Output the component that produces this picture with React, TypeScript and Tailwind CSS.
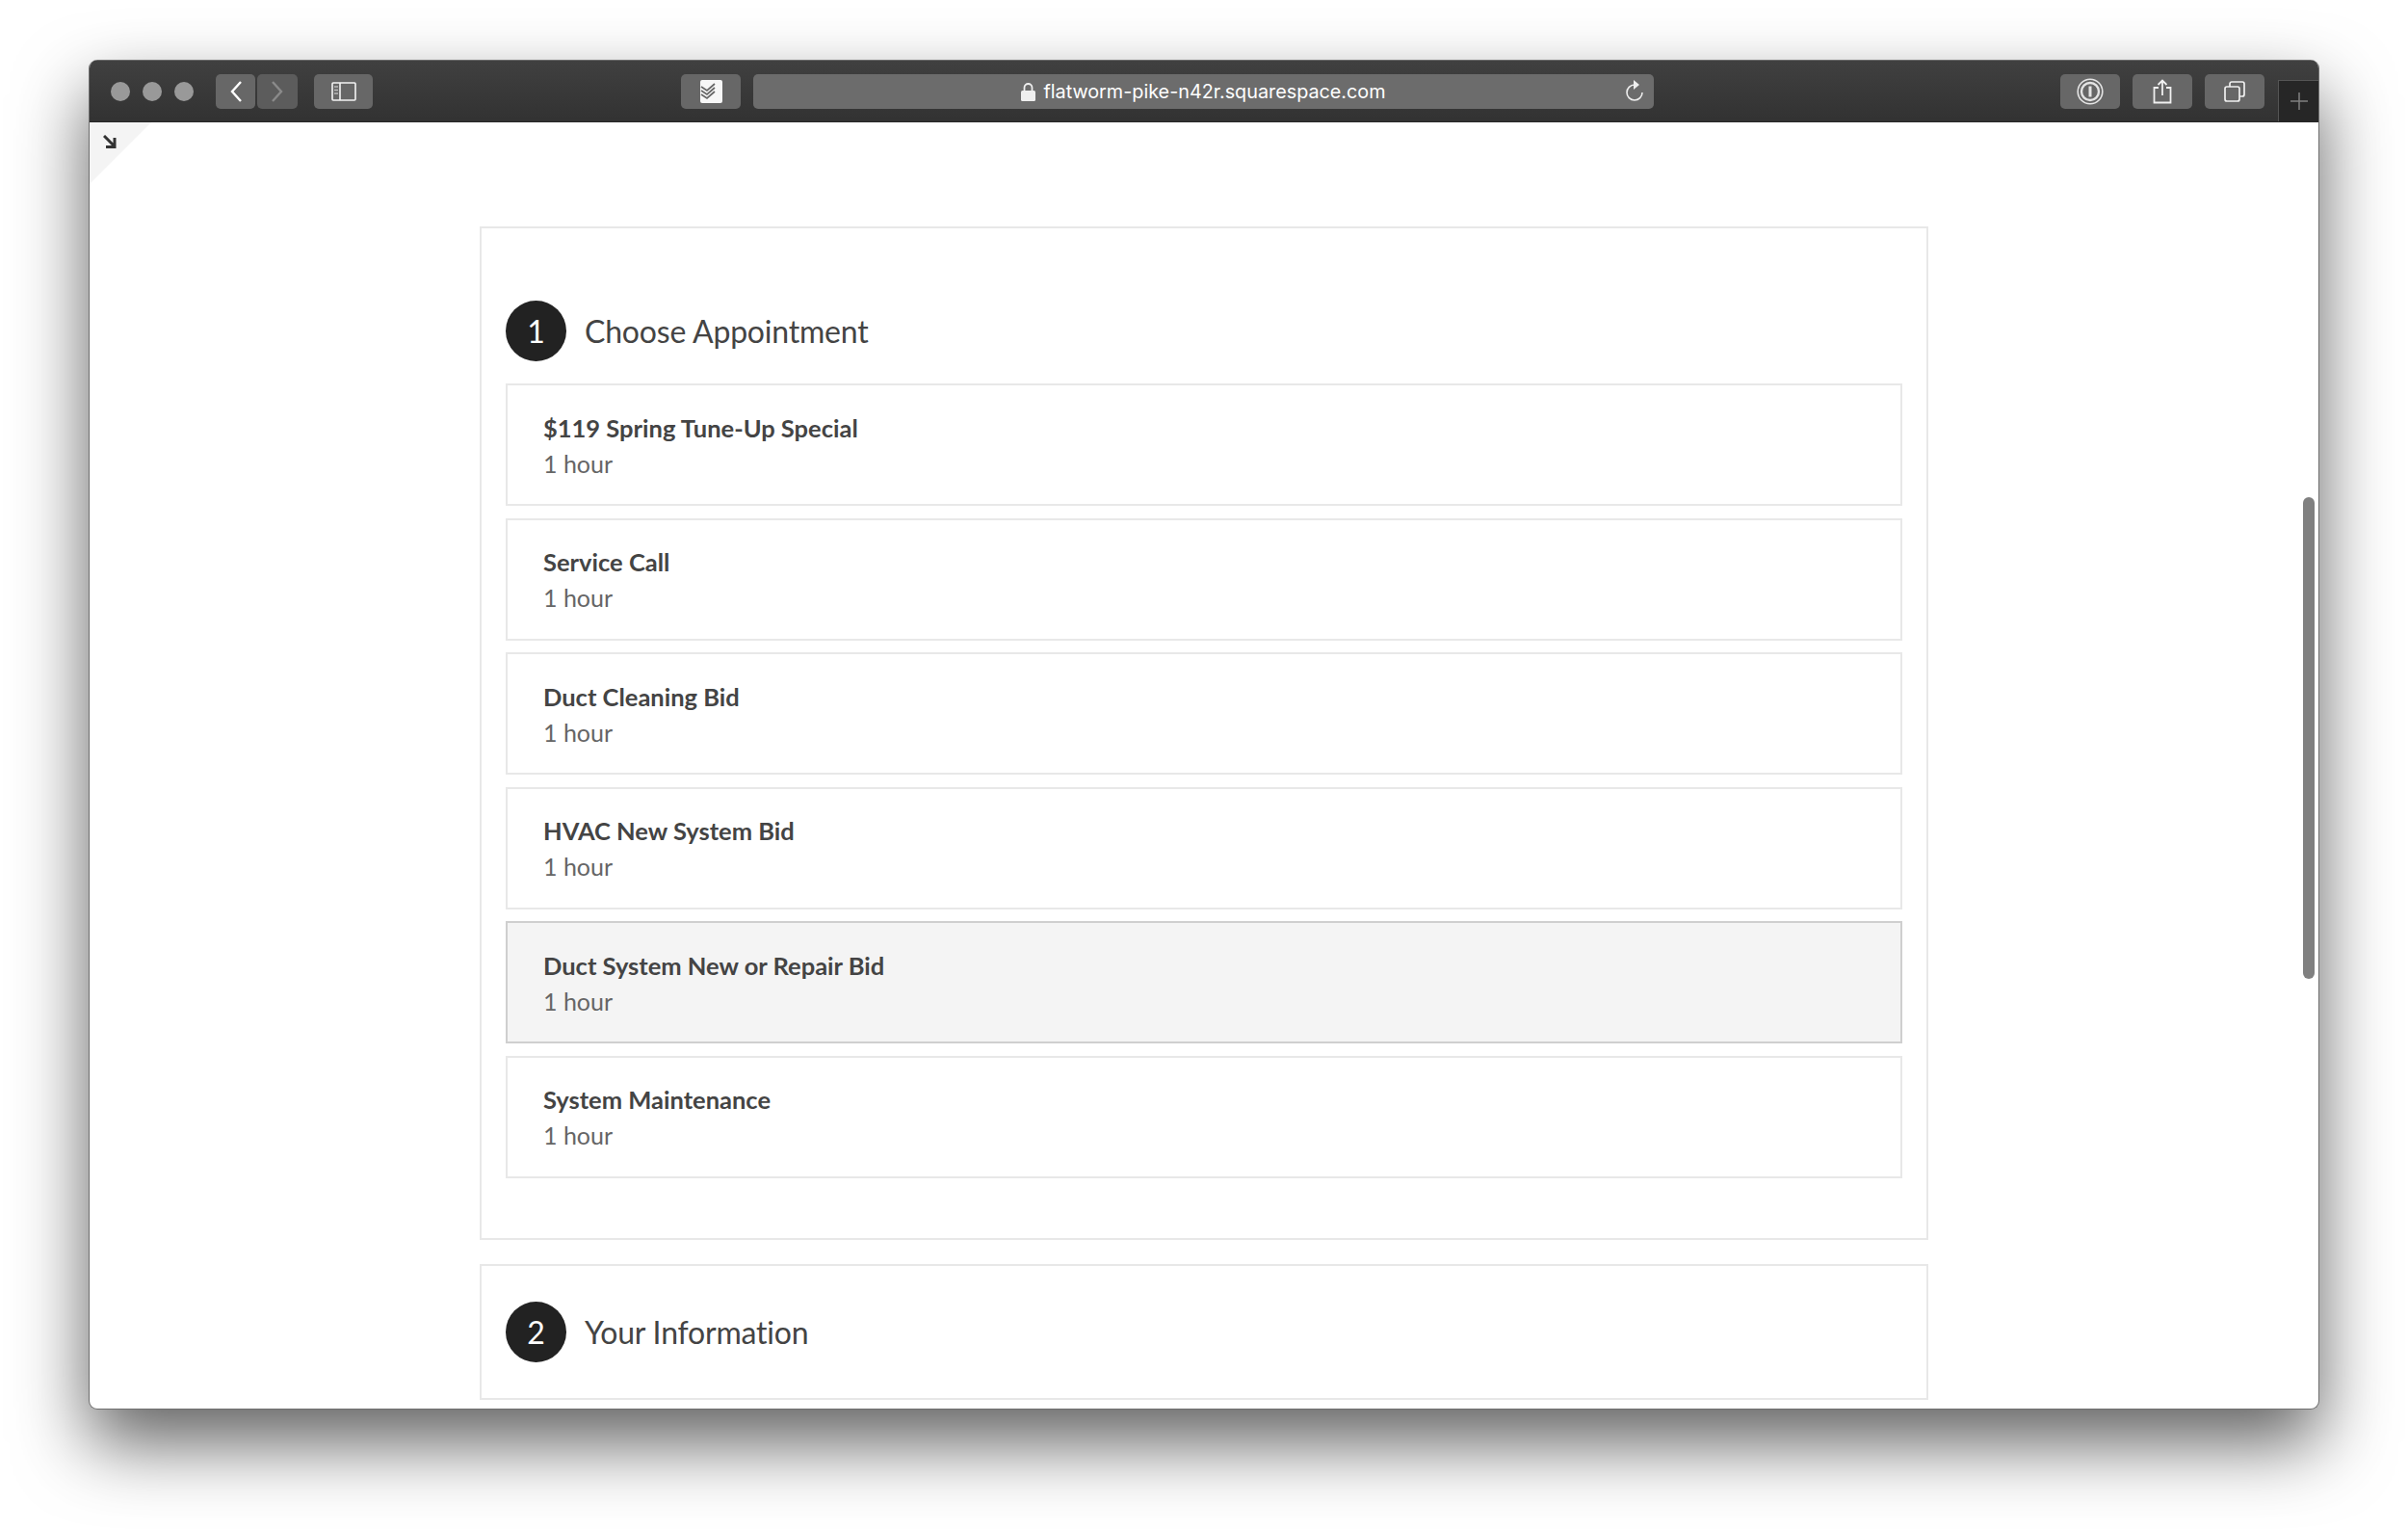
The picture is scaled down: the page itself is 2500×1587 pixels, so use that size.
const services = [
  "$119 Spring Tune-Up Special",
  "Service Call",
  "Duct Cleaning Bid",
  "HVAC New System Bid",
  "Duct System New or Repair Bid",
  "System Maintenance",
];

function ToolButton({ className = "w-[62px]", children }: { className?: string; children: React.ReactNode }) {
  return <div className={`flex h-[36px] items-center justify-center rounded-[5px] ${className}`}>{children}</div>;
}

function Toolbar() {
  return (
    <div className="relative flex h-[65px] shrink-0 items-center border-b border-t border-b-[#272727] border-t-[#6a6a6a] bg-gradient-to-b from-[#404040] to-[#323232] pl-[22px] pr-[56px] pt-[1px]">
      <div className="flex gap-[13px]">
        <div className="h-[20px] w-[20px] rounded-full bg-[#999999]" />
        <div className="h-[20px] w-[20px] rounded-full bg-[#999999]" />
        <div className="h-[20px] w-[20px] rounded-full bg-[#999999]" />
      </div>
      <div className="ml-[23px] flex gap-[2px]">
        <ToolButton className="w-[41px] bg-[#676767]">
          <svg width="14" height="24" viewBox="0 0 14 24" fill="none" stroke="#fff" strokeWidth="2.4">
            <path d="M12 2 3 12l9 10" />
          </svg>
        </ToolButton>
        <ToolButton className="w-[42px] bg-[#5c5c5c]">
          <svg width="14" height="24" viewBox="0 0 14 24" fill="none" stroke="#8a8a8a" strokeWidth="2.4">
            <path d="m2 2 9 10-9 10" />
          </svg>
        </ToolButton>
      </div>
      <ToolButton className="ml-[17px] w-[61px] bg-[#676767]">
        <svg width="26" height="20" viewBox="0 0 26 20" fill="none" stroke="#f4f4f4" strokeWidth="1.6">
          <rect x="1" y="1" width="24" height="18" rx="1" />
          <path d="M9 1v18" />
          <path d="M3 5h4M3 8.500h4M3 12h4" stroke="#bbb" strokeWidth="1.5" />
        </svg>
      </ToolButton>
      <ToolButton className="ml-[320px] w-[62px] bg-[#676767]">
        <svg width="23" height="24" viewBox="0 0 23 24">
          <rect width="23" height="24" rx="2" fill="#f7f7f7" />
          <path d="m1 7 6 4 8-7M1 11l6 4 8-7M1 15l6 4 8-7" fill="none" stroke="#666" strokeWidth="1.7" />
        </svg>
      </ToolButton>
      <div className="relative ml-[13px] flex h-[36px] w-[935px] items-center justify-center rounded-[5px] bg-[#6c6c6c] font-['Inter',sans-serif] text-[19.8px] text-white">
        <svg className="mr-[8px]" width="15" height="19" viewBox="0 0 15 19">
          <path d="M3.500 8V5a4 4 0 0 1 8 0v3" fill="none" stroke="#eee" strokeWidth="1.8" />
          <rect y="8" width="15" height="11" rx="1.500" fill="#eee" />
        </svg>
        <span className="pt-[2px]">flatworm-pike-n42r.squarespace.com</span>
        <svg className="absolute right-[9px] top-[6px]" width="22" height="24" viewBox="0 0 22 24" fill="none" stroke="#eee" strokeWidth="1.6">
          <path d="M11 5a8 8 0 1 0 8 8" />
          <path d="M10 0l6 5-6 5" fill="#eee" stroke="none" />
        </svg>
      </div>
      <div className="ml-auto flex gap-[13px]">
        <ToolButton className="w-[62px] bg-[#676767]">
          <svg width="28" height="28" viewBox="0 0 28 28" fill="none" stroke="#e4e4e4">
            <circle cx="14" cy="14" r="12.8" strokeWidth="1.6" />
            <circle cx="14" cy="14" r="9" strokeWidth="2.4" />
            <path d="M14 8.500v11" strokeWidth="3" />
          </svg>
        </ToolButton>
        <ToolButton className="w-[62px] bg-[#676767]">
          <svg width="20" height="26" viewBox="0 0 20 26" fill="none" stroke="#f0f0f0" strokeWidth="1.8">
            <path d="M6 9H1.500v15.500h17V9H14" />
            <path d="M10 17V2M5.500 6 10 1.500 14.500 6" />
          </svg>
        </ToolButton>
        <ToolButton className="w-[62px] bg-[#676767]">
          <svg width="22" height="22" viewBox="0 0 22 22" fill="none" stroke="#f0f0f0" strokeWidth="1.7">
            <rect x="1" y="6" width="15" height="15" rx="2" />
            <path d="M6 6V3a2 2 0 0 1 2-2h11a2 2 0 0 1 2 2v11a2 2 0 0 1-2 2h-3" />
          </svg>
        </ToolButton>
      </div>
      <div className="absolute bottom-0 right-0 flex h-[43px] w-[42px] items-center justify-center border-l border-t border-[#555555] bg-[#262626]">
        <svg width="20" height="20" viewBox="0 0 20 20" stroke="#808080" strokeWidth="1.5">
          <path d="M10 1v18M1 10h18" />
        </svg>
      </div>
    </div>
  );
}

function StepHeading({ n, title }: { n: number; title: string }) {
  return (
    <div className="flex items-center gap-[19px]">
      <div className="flex h-[63px] w-[63px] items-center justify-center rounded-full bg-[#222222] text-[32px] text-white">{n}</div>
      <h2 className="pt-[1px] text-[32px] tracking-[-0.2px] text-[#444444]">{title}</h2>
    </div>
  );
}

export default function App() {
  return (
    <div className="h-[1587px] w-[2500px] overflow-hidden bg-white pl-[92px] pt-[62px] font-['Lato',sans-serif]">
      <div className="flex h-[1401px] w-[2316px] flex-col overflow-hidden rounded-[9px] border-x border-b border-[#6e6e6e] bg-white shadow-[0_35px_75px_rgba(0,0,0,0.62)]">
        <Toolbar />
        <div className="relative flex flex-1 flex-col items-center overflow-hidden pt-[108px]">
          <div className="absolute left-0 top-0 h-0 w-0 border-r-[64px] border-t-[64px] border-r-transparent border-t-[#f4f4f4]" />
          <svg className="absolute left-[14px] top-[13px]" width="14" height="14" viewBox="0 0 14 14" fill="none" stroke="#333" strokeWidth="3">
            <path d="M1 1l11 11M12 3v9.500H3" />
          </svg>
          <div className="absolute right-[4px] top-[389px] h-[500px] w-[12px] rounded-full bg-[#808080]" />
          <section className="flex h-[1052px] w-[1504px] shrink-0 flex-col border-2 border-[#e8e8e8] px-[25px] pt-[75px]">
            <StepHeading n={1} title="Choose Appointment" />
            <div className="mt-[23px] flex flex-col gap-[12.6px]">
              {services.map((s, i) => (
                <div key={s} className={`flex h-[127px] flex-col justify-center gap-[6px] border-2 pl-[37px] pt-[2px] ${i === 4 ? "border-[#cfcfcf] bg-[#f4f4f4]" : "border-[#e8e8e8]"}`}>
                  <p className="text-[25.5px] font-bold leading-[31px] text-[#444444]">{s}</p>
                  <p className="text-[25px] leading-[31px] text-[#666666]">1 hour</p>
                </div>
              ))}
            </div>
          </section>
          <section className="mt-[25px] h-[141px] w-[1504px] shrink-0 border-2 border-[#e8e8e8] px-[25px] pt-[37px]">
            <StepHeading n={2} title="Your Information" />
          </section>
        </div>
      </div>
    </div>
  );
}
